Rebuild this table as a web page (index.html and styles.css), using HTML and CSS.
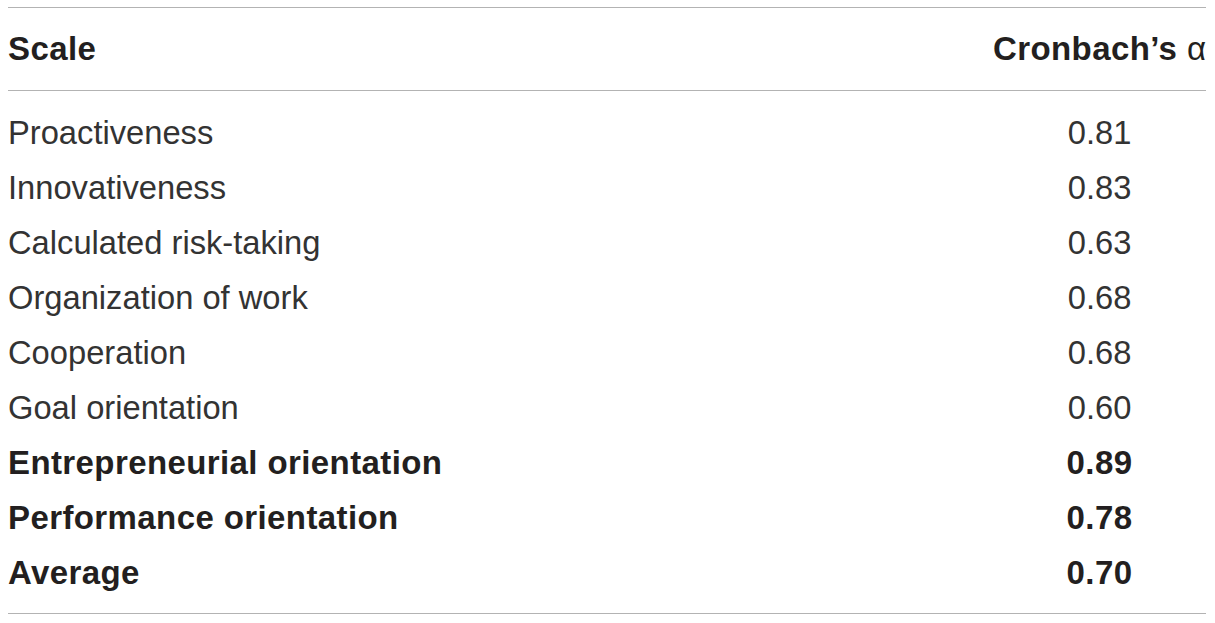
FILE: index.html
```html
<!DOCTYPE html>
<html>
<head>
<meta charset="utf-8">
<link rel="stylesheet" href="styles.css">
</head>
<body>
<table class="tbl">
  <thead>
    <tr>
      <th class="c-name">Scale</th>
      <th class="c-val">Cronbach’s <span class="alpha">α</span></th>
    </tr>
  </thead>
  <tbody>
    <tr class="first"><td class="c-name">Proactiveness</td><td class="c-val">0.81</td></tr>
    <tr><td class="c-name">Innovativeness</td><td class="c-val">0.83</td></tr>
    <tr><td class="c-name">Calculated risk-taking</td><td class="c-val">0.63</td></tr>
    <tr><td class="c-name">Organization of work</td><td class="c-val">0.68</td></tr>
    <tr><td class="c-name">Cooperation</td><td class="c-val">0.68</td></tr>
    <tr><td class="c-name">Goal orientation</td><td class="c-val">0.60</td></tr>
    <tr class="bold"><td class="c-name">Entrepreneurial orientation</td><td class="c-val">0.89</td></tr>
    <tr class="bold"><td class="c-name">Performance orientation</td><td class="c-val">0.78</td></tr>
    <tr class="bold last"><td class="c-name">Average</td><td class="c-val">0.70</td></tr>
  </tbody>
</table>
</body>
</html>
```
FILE: styles.css
```css
html, body {
  margin: 0;
  padding: 0;
  background: #ffffff;
}
body {
  padding: 7px 9px 0 8px;
  font-family: "Liberation Sans", Arial, sans-serif;
  color: #231f20;
}
.tbl {
  width: 100%;
  border-collapse: collapse;
  border-top: 1px solid #b3b3b3;
  border-bottom: 1px solid #b3b3b3;
}
.tbl th, .tbl td {
  padding: 0;
  font-size: 32.7px;
  line-height: 55px;
  white-space: nowrap;
}
.tbl thead th {
  font-size: 33px;
  font-weight: bold;
  letter-spacing: 0.4px;
  padding-top: 13px;
  padding-bottom: 14px;
  border-bottom: 1px solid #b3b3b3;
}
.alpha {
  font-weight: normal;
  letter-spacing: 0;
}
.c-name {
  text-align: left;
  width: 100%;
  padding-left: 1px;
}
.c-val {
  text-align: center;
  padding-right: 3px;
}
.tbl td {
  font-weight: normal;
  letter-spacing: 0;
  color: #333333;
}
.tbl tr.bold td {
  font-size: 33px;
  font-weight: bold;
  letter-spacing: 0.4px;
  color: #231f20;
}
.tbl tr.first td {
  padding-top: 14px;
}
.tbl tr.last td {
  padding-bottom: 13px;
}
```
